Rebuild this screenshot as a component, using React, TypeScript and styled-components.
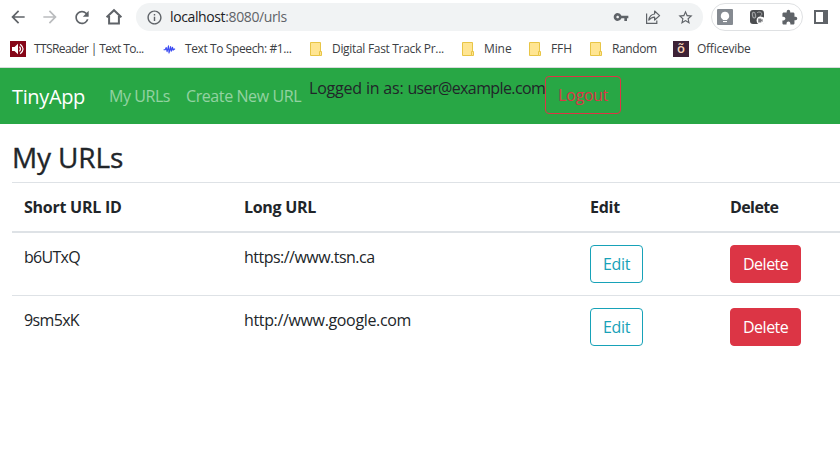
import React from "react";
import styled, { createGlobalStyle, css } from "styled-components";
import {
  MdArrowBack,
  MdArrowForward,
  MdExtension,
  MdInfoOutline,
  MdRefresh,
  MdStarBorder,
  MdVpnKey,
} from "react-icons/md";

const GlobalStyle = createGlobalStyle`
  * { box-sizing: border-box; }
  html, body { margin: 0; height: 100%; overflow: hidden; }
  body {
    background: #fff;
    color: #212529;
    font: 400 16px/24px "Open Sans", "Noto Sans", sans-serif;
  }
`;

const Text = styled.span<{ $track?: number }>`
  white-space: nowrap;
  letter-spacing: ${({ $track = 0 }) => $track}px;
`;

const Screen = styled.div`
  width: 840px;
  height: 452px;
  overflow: hidden;
`;

/* Browser chrome */

const Chrome = styled.header`
  height: 68px;
  border-bottom: 1px solid #d9dadc;
`;

const Toolbar = styled.div`
  display: flex;
  align-items: center;
  height: 34px;
  padding-left: 8px;
`;

const ToolButton = styled.span<{ $muted?: boolean }>`
  display: flex;
  flex: none;
  justify-content: center;
  width: 20px;
  margin-right: 12px;
  color: ${({ $muted }) => ($muted ? "#babcbe" : "#5f6368")};
`;

const AddressBar = styled.div`
  display: flex;
  flex: none;
  align-items: center;
  width: 567px;
  height: 28px;
  padding: 0 9px 0 10px;
  border-radius: 14px;
  background: #f1f3f4;
  color: #5f6368;
`;

const Address = styled(Text)`
  flex: 1;
  margin-left: 7px;
  font-size: 14px;
  line-height: 20px;
`;

const Host = styled.span`
  color: #202124;
`;

const AddressActions = styled.div`
  display: flex;
  align-items: center;
  gap: 16px;
`;

const Extensions = styled.div`
  display: flex;
  flex: none;
  align-items: center;
  gap: 16px;
  width: 92px;
  height: 28px;
  margin: 0 11px 0 8px;
  padding-left: 5px;
  border: 1px solid #dfe1e3;
  border-radius: 14px;
  color: #5f6368;
`;

const Bookmarks = styled.nav`
  display: flex;
  align-items: center;
  height: 30px;
  padding-left: 10px;
`;

const Bookmark = styled.span<{ $width: number; $gap?: number }>`
  display: flex;
  flex: none;
  align-items: center;
  gap: ${({ $gap = 8 }) => $gap}px;
  width: ${({ $width }) => $width}px;
  color: #3c4043;
  font-size: 12px;
  line-height: 16px;
`;

/* Application */

const Navbar = styled.nav`
  display: flex;
  height: 56px;
  padding: 8px 12px;
  background: #28a745;
`;

const Brand = styled(Text)`
  width: 73px;
  margin-right: 16px;
  color: #fff;
  font-size: 20px;
  line-height: 41px;
`;

const NavLink = styled(Text)<{ $width: number }>`
  width: ${({ $width }) => $width}px;
  padding: 0 8px;
  color: rgba(255, 255, 255, 0.5);
  line-height: 40px;
`;

const Account = styled.span`
  width: 236px;
  white-space: nowrap;
  line-height: 24px;
`;

const buttonTones = {
  info: css`
    border-color: #17a2b8;
    color: #17a2b8;
  `,
  logout: css`
    border-color: #dc3545;
    color: #dc3545;
  `,
  danger: css`
    border-color: #dc3545;
    background: #dc3545;
    color: #fff;
  `,
};

const Button = styled.button<{
  $tone: keyof typeof buttonTones;
  $width: number;
}>`
  display: block;
  width: ${({ $width }) => $width}px;
  height: 38px;
  padding: 0 0 1px 12px;
  border: 1px solid;
  border-radius: 4px;
  background: transparent;
  font: inherit;
  text-align: left;
  ${({ $tone }) => buttonTones[$tone]}
`;

const Content = styled.main`
  padding: 16px 0 0 12px;
`;

const Heading = styled.h3`
  margin: 0;
  height: 42px;
  font-size: 28px;
  font-weight: 500;
  line-height: 34px;
  -webkit-text-stroke: 0.35px currentColor;
`;

const Table = styled.div`
  width: 840px;
`;

const Row = styled.div<{ $head?: boolean }>`
  display: grid;
  grid-template-columns: 220px 346px 140px 1fr;
  height: ${({ $head }) => ($head ? 51 : 63)}px;
  border-top: 1px solid #dee2e6;
  ${({ $head }) =>
    $head &&
    css`
      border-bottom: 2px solid #dee2e6;
      font-weight: 700;
    `}
`;

const BodyRows = styled.div`
  ${Row}:first-child {
    height: 62px;
    border-top: 0;
  }
`;

const Cell = styled.div`
  padding: 12px 12px 0;
  line-height: 24px;
`;

const HomeIcon = () => (
  <svg width="18" height="18" viewBox="0 0 18 18" fill="none" stroke="currentColor" strokeWidth="2">
    <path d="M1.6 9.3 9 2.2l7.4 7.1M4.1 8v7.5h9.8V8" />
  </svg>
);

const ShareIcon = () => (
  <svg width="16" height="16" viewBox="0 0 16 16" fill="none" stroke="currentColor" strokeWidth="1.2">
    <path d="M1.6 4.5v9.9h10.2v-2.8" />
    <path d="M3.8 11.2c.5-3.8 2.6-5.8 5.8-6.2V2l5 4.6-5 4.4V8.1c-2.5.1-4.2.9-5.8 3.1Z" strokeLinejoin="round" />
  </svg>
);

const BulbIcon = () => (
  <svg width="16" height="16" viewBox="0 0 16 16">
    <rect width="16" height="16" rx="1" fill="#858a91" />
    <path d="M8 2.8a4.1 4.1 0 0 0-2.2 7.6V11h4.4v-.6A4.1 4.1 0 0 0 8 2.8Z" fill="#fff" />
    <path d="M6 12h4v1.1H6z" fill="#fff" />
  </svg>
);

const RecorderIcon = () => (
  <svg width="16" height="16" viewBox="0 0 16 16">
    <rect x="1" y="1" width="14" height="14" rx="3" fill="#4b4d50" />
    <ellipse cx="5" cy="6.2" rx="1.6" ry="2.9" fill="#55575a" stroke="#a5a7a9" strokeWidth="1" transform="rotate(-12 5 6.2)" />
    <path d="M8.2 3.6c2-1.2 4.4-.6 4.6 1.2.1 1.2-.8 2-2 2.6" fill="none" stroke="#a5a7a9" />
    <circle cx="11.6" cy="11.4" r="4" fill="#fff" />
    <path d="M9.2 9.5h3.1v1.2l1.3-.8v3l-1.3-.8v1.3H9.2z" fill="#77797c" />
  </svg>
);

const PanelIcon = () => (
  <svg width="14" height="14" viewBox="0 0 14 14">
    <path d="M0 0h14v14H0zM2 2v10h7V2z" fill="#5f6368" fillRule="evenodd" />
  </svg>
);

const SpeakerIcon = () => (
  <svg width="16" height="16" viewBox="0 0 16 16">
    <rect width="16" height="16" fill="#860618" />
    <path d="M2 6h2.5L8 2.7v10.6L4.5 10H2z" fill="#fff" />
    <path d="M9.5 5.7q2 2.3 0 4.6M10.2 3.2q5.7 4.8 0 9.6" fill="none" stroke="#fff" strokeWidth="1.2" />
  </svg>
);

const WaveIcon = () => (
  <svg width="16" height="16" viewBox="0 0 16 16" fill="none" stroke="#3b4bf2" strokeWidth="1.1" strokeLinejoin="round">
    <path d="M2.6 8.8h1.6l1-2.3.9 4.2 1.4-5.9.5 7.2 1.6-6.4.6 4.7 1.3-4.1.6 3.1.8-1.2h1.2" />
  </svg>
);

const FolderIcon = () => (
  <svg width="12" height="14" viewBox="0 0 12 14" fill="#ffe592" stroke="#e8c546">
    <path d="M.5.5h10v9.5l-1 3.5h-9z" />
    <path d="M9.5 9.5h2v4h-2z" />
  </svg>
);

const OfficevibeIcon = styled.span`
  display: flex;
  justify-content: center;
  width: 16px;
  height: 16px;
  background: #3d2135;
  color: #f6d5b8;
  font-size: 13px;
  font-weight: 600;
  line-height: 14px;
`;

const bookmarks = [
  { label: "TTSReader | Text To...", icon: <SpeakerIcon />, width: 151, track: -0.6 },
  { label: "Text To Speech: #1...", icon: <WaveIcon />, width: 149, track: -0.39 },
  { label: "Digital Fast Track Pr...", icon: <FolderIcon />, width: 152, gap: 10, track: -0.31 },
  { label: "Mine", icon: <FolderIcon />, width: 67, gap: 10, track: -0.1 },
  { label: "FFH", icon: <FolderIcon />, width: 61, gap: 10, track: -0.1 },
  { label: "Random", icon: <FolderIcon />, width: 83, gap: 10, track: -0.4 },
  { label: "Officevibe", icon: <OfficevibeIcon>õ</OfficevibeIcon>, width: 90, track: -0.25 },
];

const urls = [
  { id: "b6UTxQ", idTrack: -0.7, target: "https://www.tsn.ca", targetTrack: -0.52 },
  { id: "9sm5xK", idTrack: -0.65, target: "http://www.google.com", targetTrack: -0.35 },
];

export default function App() {
  return (
    <Screen>
      <GlobalStyle />
      <Chrome>
        <Toolbar>
          <ToolButton><MdArrowBack size={20} /></ToolButton>
          <ToolButton $muted><MdArrowForward size={20} /></ToolButton>
          <ToolButton><MdRefresh size={21} /></ToolButton>
          <ToolButton><HomeIcon /></ToolButton>
          <AddressBar>
            <MdInfoOutline size={17} />
            <Address $track={-0.38}><Host>localhost</Host>:8080/urls</Address>
            <AddressActions>
              <MdVpnKey size={16} />
              <ShareIcon />
              <MdStarBorder size={17} />
            </AddressActions>
          </AddressBar>
          <Extensions>
            <BulbIcon />
            <RecorderIcon />
            <MdExtension size={17} />
          </Extensions>
          <PanelIcon />
        </Toolbar>
        <Bookmarks>
          {bookmarks.map(({ label, icon, width, gap, track }) => (
            <Bookmark key={label} $width={width} $gap={gap}>
              {icon}
              <Text $track={track}>{label}</Text>
            </Bookmark>
          ))}
        </Bookmarks>
      </Chrome>
      <Navbar>
        <Brand $track={-0.36}>TinyApp</Brand>
        <NavLink $width={77} $track={-0.43}>My URLs</NavLink>
        <NavLink $width={131} $track={-0.41}>Create New URL</NavLink>
        <Account>
          <Text $track={-0.2}>Logged in as: </Text>
          <Text $track={-0.6}>user@example.com</Text>
        </Account>
        <Button $tone="logout" $width={76}><Text $track={-0.3}>Logout</Text></Button>
      </Navbar>
      <Content>
        <Heading><Text $track={-0.15}>My URLs</Text></Heading>
        <Table>
          <Row $head>
            <Cell><Text $track={-0.25}>Short URL ID</Text></Cell>
            <Cell><Text $track={-0.3}>Long URL</Text></Cell>
            <Cell><Text $track={-0.25}>Edit</Text></Cell>
            <Cell><Text $track={-0.6}>Delete</Text></Cell>
          </Row>
          <BodyRows>
            {urls.map((url) => (
              <Row key={url.id}>
                <Cell><Text $track={url.idTrack}>{url.id}</Text></Cell>
                <Cell><Text $track={url.targetTrack}>{url.target}</Text></Cell>
                <Cell><Button $tone="info" $width={53}><Text $track={-0.35}>Edit</Text></Button></Cell>
                <Cell><Button $tone="danger" $width={71}><Text $track={-0.5}>Delete</Text></Button></Cell>
              </Row>
            ))}
          </BodyRows>
        </Table>
      </Content>
    </Screen>
  );
}
